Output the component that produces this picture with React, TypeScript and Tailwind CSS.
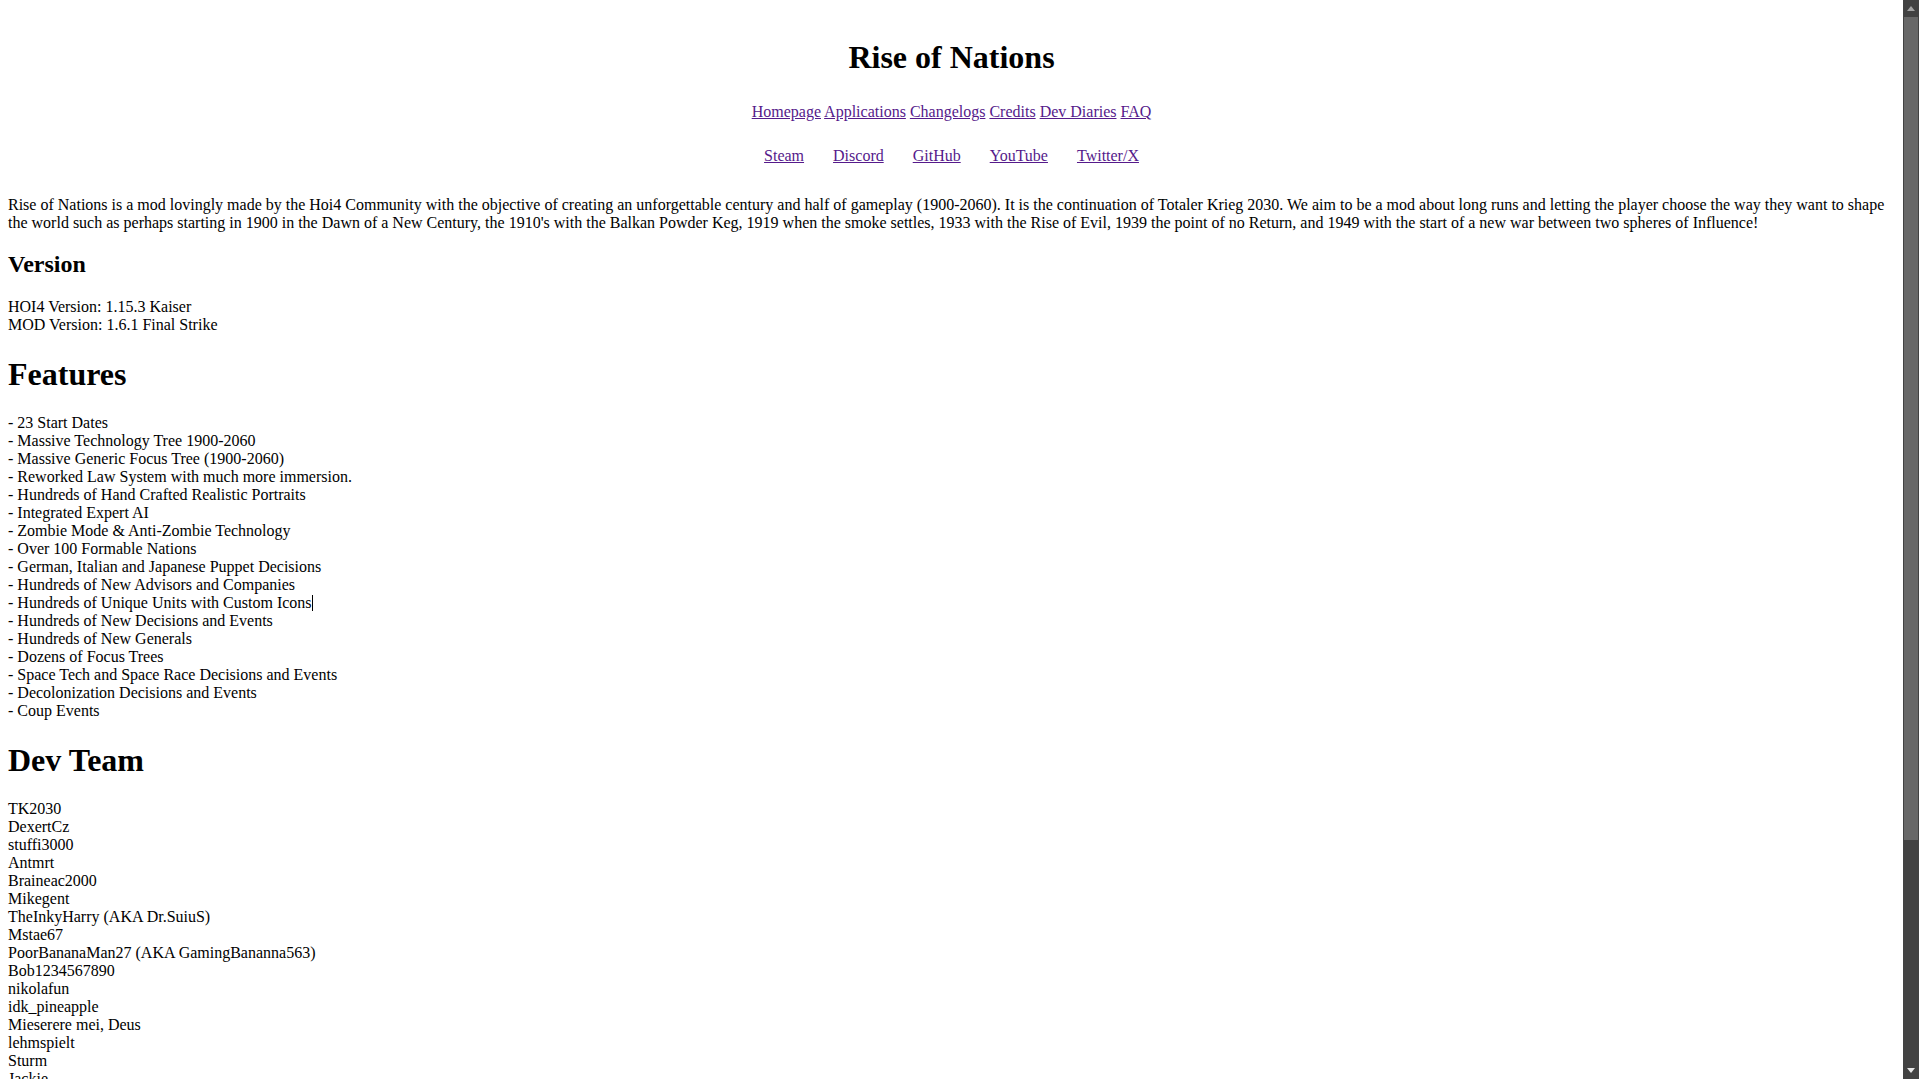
import React from 'react';

const navLinks = ['Homepage', 'Applications', 'Changelogs', 'Credits', 'Dev Diaries', 'FAQ'];
const socialLinks = ['Steam', 'Discord', 'GitHub', 'YouTube', 'Twitter/X'];

const features = [
  '23 Start Dates',
  'Massive Technology Tree 1900-2060',
  'Massive Generic Focus Tree (1900-2060)',
  'Reworked Law System with much more immersion.',
  'Hundreds of Hand Crafted Realistic Portraits',
  'Integrated Expert AI',
  'Zombie Mode & Anti-Zombie Technology',
  'Over 100 Formable Nations',
  'German, Italian and Japanese Puppet Decisions',
  'Hundreds of New Advisors and Companies',
  'Hundreds of Unique Units with Custom Icons',
  'Hundreds of New Decisions and Events',
  'Hundreds of New Generals',
  'Dozens of Focus Trees',
  'Space Tech and Space Race Decisions and Events',
  'Decolonization Decisions and Events',
  'Coup Events',
];

const devTeam = [
  'TK2030',
  'DexertCz',
  'stuffi3000',
  'Antmrt',
  'Braineac2000',
  'Mikegent',
  'TheInkyHarry (AKA Dr.SuiuS)',
  'Mstae67',
  'PoorBananaMan27 (AKA GamingBananna563)',
  'Bob1234567890',
  'nikolafun',
  'idk_pineapple',
  'Mieserere mei, Deus',
  'lehmspielt',
  'Sturm',
  'Jackie',
];

// fake scrollbar, the page itself never scrolls
const Scrollbar: React.FC = () => (
  <div className="w-[16px] shrink-0 h-full bg-[#424242] flex flex-col">
    <div className="h-[17px] flex items-center justify-center">
      <svg width="8" height="5" viewBox="0 0 8 5">
        <path d="M4 0 L8 5 L0 5 Z" fill="#a3a3a3" />
      </svg>
    </div>
    <div className="h-[823px] mx-px bg-[#686868]" />
    <div className="flex-1" />
    <div className="h-[17px] flex items-center justify-center">
      <svg width="8" height="5" viewBox="0 0 8 5">
        <path d="M0 0 L8 0 L4 5 Z" fill="#e6e6e6" />
      </svg>
    </div>
  </div>
);

export default function App() {
  return (
    <div className="flex h-[1079px] w-full overflow-hidden bg-white text-black font-['Liberation_Serif','Times_New_Roman',serif] text-[16px] leading-[18px]">
      <main className="flex-1 min-w-0 px-2 pt-[39px]">
        <h1 className="text-center text-[32px] leading-[37px] font-bold">Rise of Nations</h1>

        <p className="mt-[27px] text-center">
          {navLinks.map((l, i) => (
            <React.Fragment key={l}>
              {i > 0 && ' '}
              <a href="#" className="text-[#551a8b] underline">{l}</a>
            </React.Fragment>
          ))}
        </p>

        <p className="mt-[25.5px] text-center">
          {socialLinks.map((l, i) => (
            <React.Fragment key={l}>
              {i > 0 && ' '}
              <a href="#" className="mx-[12.5px] text-[#551a8b] underline">{l}</a>
            </React.Fragment>
          ))}
        </p>

        <p className="mt-[31px]">
          Rise of Nations is a mod lovingly made by the Hoi4 Community with the objective of creating an unforgettable
          century and half of gameplay (1900-2060). It is the continuation of Totaler Krieg 2030. We aim to be a mod about
          long runs and letting the player choose the way they want to shape the world such as perhaps starting in 1900 in
          the Dawn of a New Century, the 1910's with the Balkan Powder Keg, 1919 when the smoke settles, 1933 with the Rise
          of Evil, 1939 the point of no Return, and 1949 with the start of a new war between two spheres of Influence!
        </p>

        <h2 className="mt-[19.92px] text-[24px] leading-[27px] font-bold">Version</h2>
        <p className="mt-[19.92px]">
          HOI4 Version: 1.15.3 Kaiser
          <br />
          MOD Version: 1.6.1 Final Strike
        </p>

        <h1 className="mt-[21.44px] text-[32px] leading-[37px] font-bold">Features</h1>
        <p className="mt-[21.44px]">
          {features.map((f) => (
            <React.Fragment key={f}>
              - {f}
              {/* text caret sitting after this line */}
              {f.endsWith('Icons') && (
                <span className="inline-block w-px h-[16px] bg-black align-[-3px]" />
              )}
              <br />
            </React.Fragment>
          ))}
        </p>

        <h1 className="mt-[21.44px] text-[32px] leading-[37px] font-bold">Dev Team</h1>
        <p className="mt-[21.44px]">
          {devTeam.map((n) => (
            <React.Fragment key={n}>
              {n}
              <br />
            </React.Fragment>
          ))}
        </p>
      </main>
      <Scrollbar />
    </div>
  );
}
